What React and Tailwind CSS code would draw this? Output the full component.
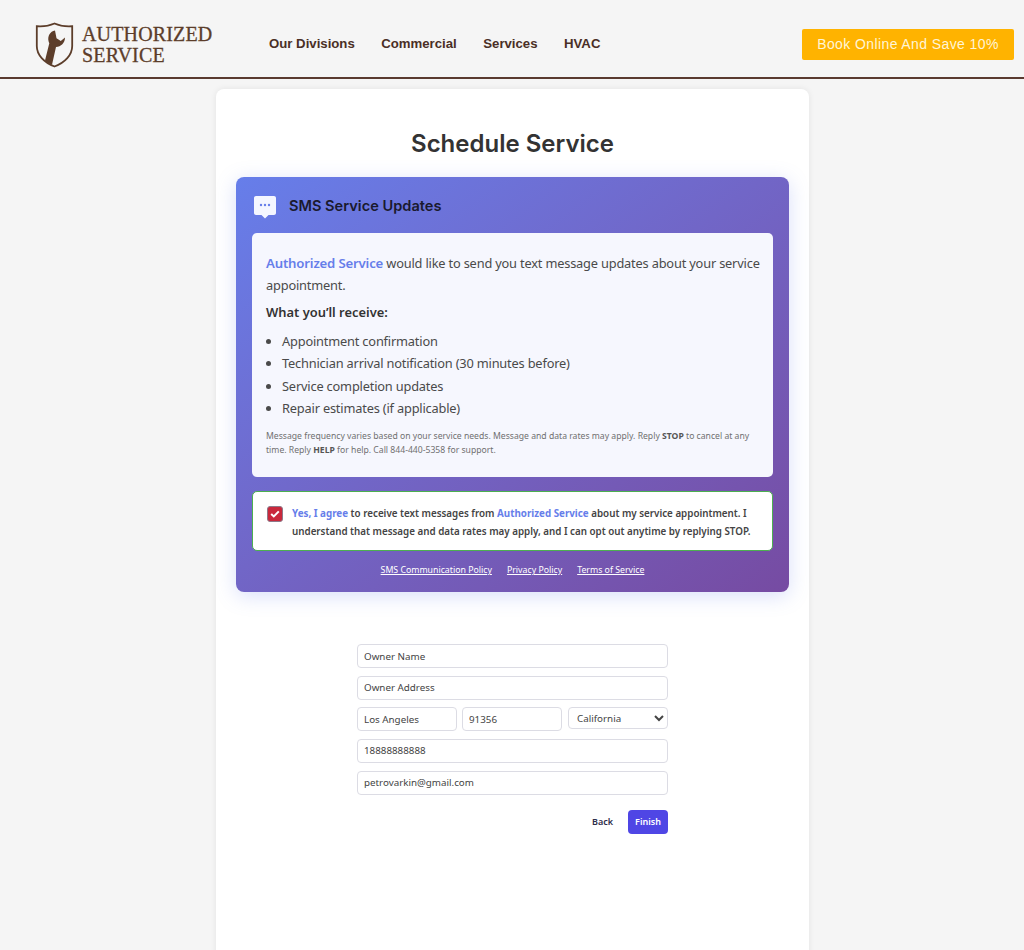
const BENEFITS = [
  'Appointment confirmation',
  'Technician arrival notification (30 minutes before)',
  'Service completion updates',
  'Repair estimates (if applicable)',
]

const NAV_LINKS = ['Our Divisions', 'Commercial', 'Services', 'HVAC']

const POLICY_LINKS = ['SMS Communication Policy', 'Privacy Policy', 'Terms of Service']

const BODY_FONT = "font-['Noto_Sans','Open_Sans',sans-serif]"

function Logo() {
  return (
    <div className="flex items-center gap-[8px] mt-[2px]">
      <svg width="39" height="46" viewBox="0 0 39 46" fill="none">
        <path d="M19.5 1.5C14 4 8 4.6 1.8 4.2V24C1.8 33 9 40.5 19.5 44.5C30 40.5 37.2 33 37.2 24V4.2C31 4.6 25 4 19.5 1.5Z" stroke="#5c3d2a" strokeWidth="1.8" />
        <path d="M20 8.5C15 9.5 12.5 14 13.5 19C13.7 20 14 20.6 14.3 21.2L10 38.5C11.5 40.5 14.5 42 17 42.8L21 25C26 24.8 30 21 30 15.5L25.8 19L21.5 16.2Z" fill="#5c3d2a" />
      </svg>
      <div className="w-[133px] font-['Liberation_Serif',serif] text-[#5c3d2a] text-[20px] leading-[21px] tracking-[0.15px] [-webkit-text-stroke:0.3px_#5c3d2a]">
        <div>AUTHORIZED</div>
        <div>SERVICE</div>
      </div>
    </div>
  )
}

function Header() {
  return (
    <header className="h-[79px] pt-[10px] flex items-center border-b-2 border-[#5a3a30] bg-[#f5f5f5] pl-[35px] pr-[10px] font-['Liberation_Sans',sans-serif]">
      <Logo />
      <nav className="flex gap-[26.5px] ml-[54px] text-[13.2px] font-bold text-[#4a2f26]">
        {NAV_LINKS.map(link => (
          <a key={link} href="#" className="whitespace-nowrap">{link}</a>
        ))}
      </nav>
      <button className="ml-auto mt-[2px] w-[212px] h-[31px] rounded-[2px] bg-[#ffb300] text-[#fff5d6] text-[14px] tracking-[0.4px]">
        Book Online And Save 10%
      </button>
    </header>
  )
}

function SmsPanel() {
  return (
    <section className="rounded-lg bg-gradient-to-br from-[#667eea] to-[#764ba2] px-4 pt-[17px] pb-[15px] shadow-[0_4px_20px_rgba(102,126,234,0.25)]">
      {/* Title */}
      <div className="flex items-center gap-[12px] pl-[1px] h-[25px] mb-[14px]">
        <svg width="24" height="24" viewBox="0 0 24 24" className="shrink-0">
          <path d="M3 1H21C22.1 1 23 1.9 23 3V18C23 19.1 22.1 20 21 20H15.5L12 23.5L8.5 20H3C1.9 20 1 19.1 1 18V3C1 1.9 1.9 1 3 1Z" fill="#f4f6ff" />
          <circle cx="8" cy="10" r="1.2" fill="#667eea" />
          <circle cx="12" cy="10" r="1.2" fill="#667eea" />
          <circle cx="16" cy="10" r="1.2" fill="#667eea" />
        </svg>
        <h2 className="font-['Inter',sans-serif] text-[14.6px] font-semibold text-[#1a1a2e]">SMS Service Updates</h2>
      </div>

      {/* Details */}
      <div className={`rounded-[5px] bg-[#f6f7fe] px-[14px] pt-[19px] pb-[20px] text-[#4a4a4a] ${BODY_FONT}`}>
        <p className="-mr-[6px] text-[12.8px] leading-[22px] tracking-[-0.18px]">
          <span className="text-[13.2px] font-semibold text-[#667eea]">Authorized Service</span> would like to send you text message updates about your service appointment.
        </p>
        <p className="mt-[5px] text-[12.9px] leading-[22px] font-semibold text-[#333333]">What you’ll receive:</p>
        <ul className="mt-[7px] list-disc pl-4 text-[12.8px] leading-[22.3px] tracking-[-0.18px]">
          {BENEFITS.map(item => (
            <li key={item}>{item}</li>
          ))}
        </ul>
        <p className="mt-[10px] text-[8.65px] leading-[14px] text-[#707070]">
          Message frequency varies based on your service needs. Message and data rates may apply. Reply <strong className="text-[#555555]">STOP</strong> to cancel at any time. Reply <strong className="text-[#555555]">HELP</strong> for help. Call 844-440-5358 for support.
        </p>
      </div>

      {/* Consent */}
      <label className={`mt-[14px] flex gap-[8px] rounded-[5px] border border-[#4caf50] bg-white pl-[14px] pr-[12px] h-[60px] pt-[13px] ${BODY_FONT}`}>
        <span className="mt-[1px] w-[16px] h-[16px] shrink-0 rounded-[3px] bg-[#c9283c] flex items-center justify-center border border-[#8d7a8a]">
          <svg width="10" height="8" viewBox="0 0 10 8" fill="none">
            <path d="M1.2 4L3.8 6.4L8.8 1.4" stroke="white" strokeWidth="2" />
          </svg>
        </span>
        <span className="text-[9.8px] leading-[18px] font-semibold text-[#444444] pl-[1px]">
          <span className="font-bold text-[#667eea]">Yes, I agree</span> to receive text messages from <span className="font-bold text-[#667eea]">Authorized Service</span> about my service appointment. I understand that message and data rates may apply, and I can opt out anytime by replying STOP.
        </span>
      </label>

      {/* Policy links */}
      <div className={`mt-[12px] flex justify-center gap-[15px] text-[8.75px] leading-[14px] text-white ${BODY_FONT}`}>
        {POLICY_LINKS.map(link => (
          <a key={link} href="#" className="underline">{link}</a>
        ))}
      </div>
    </section>
  )
}

function Field({ value, className = '' }) {
  return (
    <input
      readOnly
      value={value}
      className={`h-[24px] min-w-0 rounded-[4px] border border-[#dcdce4] bg-white px-[6px] text-[9.8px] text-[#444444] outline-none ${className}`}
    />
  )
}

function ServiceForm() {
  return (
    <form className={`mt-[52px] mx-auto w-[311px] flex flex-col gap-[7.6px] ${BODY_FONT}`}>
      <Field value="Owner Name" />
      <Field value="Owner Address" />
      <div className="flex gap-[5px]">
        <Field value="Los Angeles" className="w-[100px]" />
        <Field value="91356" className="w-[100px]" />
        <select defaultValue="California" className="w-[100px] ml-[1px] h-[22px] rounded-[4px] border border-[#dcdce4] bg-white pl-[4px] text-[9.8px] text-[#444444] outline-none">
          <option>California</option>
        </select>
      </div>
      <Field value="18888888888" />
      <Field value="petrovarkin@gmail.com" />
      <div className="mt-[8px] flex justify-end items-center gap-[15px] text-[9px] font-semibold">
        <button type="button" className="text-[#2d2d4a]">Back</button>
        <button type="button" className="w-[40px] h-[24px] rounded-[4px] bg-[#4f46e5] text-white">Finish</button>
      </div>
    </form>
  )
}

export default function App() {
  return (
    <div className="h-[950px] overflow-hidden bg-[#f5f5f5]">
      <Header />
      <main className="mt-[10px] ml-[216px] w-[593px] h-[900px] rounded-t-lg bg-white px-5 shadow-[0_0_6px_rgba(0,0,0,0.08)]">
        <h1 className="pt-[38px] pb-[16px] text-center font-['Inter',sans-serif] text-[24px] leading-[34px] font-semibold text-[#333333]">Schedule Service</h1>
        <SmsPanel />
        <ServiceForm />
      </main>
    </div>
  )
}
